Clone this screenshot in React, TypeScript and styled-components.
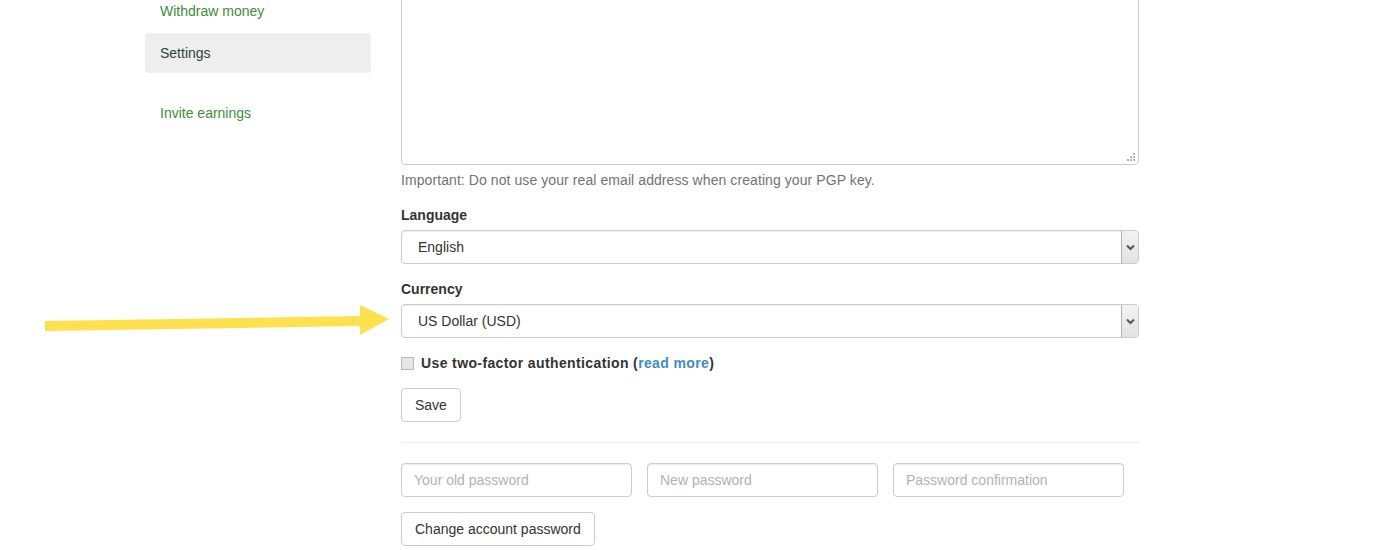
import React from 'react';
import styled, { createGlobalStyle } from 'styled-components';

const GlobalStyle = createGlobalStyle`
  html, body {
    margin: 0;
    padding: 0;
    background: #fff;
    overflow: hidden;
  }
  body {
    font-family: "Liberation Sans", Arial, sans-serif;
    font-size: 14px;
    line-height: 20px;
    color: #333;
  }
`;

const navItems = [
  { label: 'Withdraw money', active: false },
  { label: 'Settings', active: true },
];

export default function App() {
  return (
    <>
      <GlobalStyle />
      <Page>
        <Sidebar>
          {navItems.map((item) => (
            <Pill key={item.label} $active={item.active}>
              {item.label}
            </Pill>
          ))}
          <Pill $spaced>Invite earnings</Pill>
        </Sidebar>
        <Main>
          <TextAreaWrap>
            <PgpArea />
            <Grip width="9" height="9" viewBox="0 0 9 9">
              <rect x="7" y="1" width="2" height="2" />
              <rect x="4" y="4" width="2" height="2" />
              <rect x="7" y="4" width="2" height="2" />
              <rect x="1" y="7" width="2" height="2" />
              <rect x="4" y="7" width="2" height="2" />
              <rect x="7" y="7" width="2" height="2" />
            </Grip>
          </TextAreaWrap>
          <FormGroup>
            <HelpBlock>
              Important: Do not use your real email address when creating your PGP key.
            </HelpBlock>
          </FormGroup>
          <FormGroup>
            <Label>Language</Label>
            <SelectBox value="English" />
          </FormGroup>
          <FormGroup>
            <Label>Currency</Label>
            <SelectBox value="US Dollar (USD)" />
          </FormGroup>
          <CheckRow>
            <CheckBox />
            <CheckLabel>
              Use two-factor authentication (<ReadMore href="#">read more</ReadMore>)
            </CheckLabel>
          </CheckRow>
          <Button>Save</Button>
          <Divider />
          <PasswordRow>
            <PasswordInput type="password" placeholder="Your old password" />
            <PasswordInput type="password" placeholder="New password" />
            <PasswordInput type="password" placeholder="Password confirmation" />
          </PasswordRow>
          <Button>Change account password</Button>
        </Main>
      </Page>
      <Arrow width="400" height="50" viewBox="0 0 400 50">
        <polygon points="45,16 360,11 360,0 389,14 360,30 360,21 45,26" fill="#ffe04f" />
      </Arrow>
    </>
  );
}

function SelectBox({ value }: { value: string }) {
  return (
    <Select>
      <SelectValue>{value}</SelectValue>
      <SelectArrow>
        <svg width="9" height="7" viewBox="0 0 9 7">
          <path d="M1 1.5 L4.5 5 L8 1.5" stroke="#555" strokeWidth="2" fill="none" />
        </svg>
      </SelectArrow>
    </Select>
  );
}

const Page = styled.div`
  display: flex;
  align-items: flex-start;
  gap: 30px;
  margin-top: -9px;
  padding-left: 145px;
`;

const Sidebar = styled.ul`
  width: 226px;
  margin: 0;
  padding: 0;
  list-style: none;
  display: flex;
  flex-direction: column;
  gap: 2px;
`;

const Pill = styled.li<{ $active?: boolean; $spaced?: boolean }>`
  padding: 10px 15px;
  border-radius: 4px;
  margin-top: ${(p) => (p.$spaced ? '18px' : '0')};
  background: ${(p) => (p.$active ? '#eeeeee' : 'transparent')};
  color: ${(p) => (p.$active ? '#28443a' : '#3e8d3a')};
  cursor: pointer;
`;

const Main = styled.div`
  width: 738px;
  display: flex;
  flex-direction: column;
  align-items: flex-start;
`;

const TextAreaWrap = styled.div`
  position: relative;
  width: 100%;
`;

const PgpArea = styled.textarea`
  display: block;
  box-sizing: border-box;
  width: 100%;
  height: 174px;
  border: 1px solid #ccc;
  border-radius: 4px;
  resize: none;
  box-shadow: inset 0 1px 1px rgba(0, 0, 0, 0.075);
`;

const Grip = styled.svg`
  position: absolute;
  right: 4px;
  bottom: 4px;
  fill: #b5b5b5;
`;

const FormGroup = styled.div`
  width: 100%;
  margin-bottom: 15px;
`;

const HelpBlock = styled.div`
  margin-top: 5px;
  color: #737373;
  letter-spacing: 0.08px;
`;

const Label = styled.div`
  font-weight: bold;
  margin-bottom: 5px;
`;

const Select = styled.div`
  box-sizing: border-box;
  height: 34px;
  width: 100%;
  display: flex;
  align-items: stretch;
  border: 1px solid #ccc;
  border-radius: 4px;
  box-shadow: inset 0 1px 1px rgba(0, 0, 0, 0.075);
  overflow: hidden;
`;

const SelectValue = styled.div`
  flex: 1;
  display: flex;
  align-items: center;
  padding-left: 16px;
  color: #333;
`;

const SelectArrow = styled.div`
  width: 16px;
  display: flex;
  align-items: center;
  justify-content: center;
  background: linear-gradient(#f2f2f2, #e2e2e2);
  border-left: 1px solid #b3b3b3;
`;

const CheckRow = styled.label`
  display: flex;
  align-items: center;
  gap: 7px;
  height: 20px;
  margin-bottom: 15px;
`;

const CheckBox = styled.span`
  box-sizing: border-box;
  width: 13px;
  height: 13px;
  border: 1px solid #b8b8b8;
  background: #e6e6e6;
`;

const CheckLabel = styled.span`
  font-weight: bold;
  letter-spacing: 0.38px;
`;

const ReadMore = styled.a`
  color: #428bca;
  text-decoration: none;
`;

const Button = styled.button`
  box-sizing: border-box;
  height: 34px;
  padding: 6px 13px;
  font-family: inherit;
  font-size: 14px;
  line-height: 20px;
  color: #333;
  background: #fff;
  border: 1px solid #ccc;
  border-radius: 4px;
  cursor: pointer;
`;

const Divider = styled.hr`
  width: 100%;
  margin: 20px 0;
  border: 0;
  border-top: 1px solid #eee;
`;

const PasswordRow = styled.div`
  display: flex;
  gap: 15px;
  margin-bottom: 15px;
`;

const PasswordInput = styled.input`
  box-sizing: border-box;
  width: 231px;
  height: 34px;
  padding: 6px 12px;
  font-family: inherit;
  font-size: 14px;
  border: 1px solid #ccc;
  border-radius: 4px;
  box-shadow: inset 0 1px 1px rgba(0, 0, 0, 0.075);
  &::placeholder {
    color: #b3b3b3;
  }
`;

const Arrow = styled.svg`
  position: absolute;
  left: 0;
  top: 305px;
`;
